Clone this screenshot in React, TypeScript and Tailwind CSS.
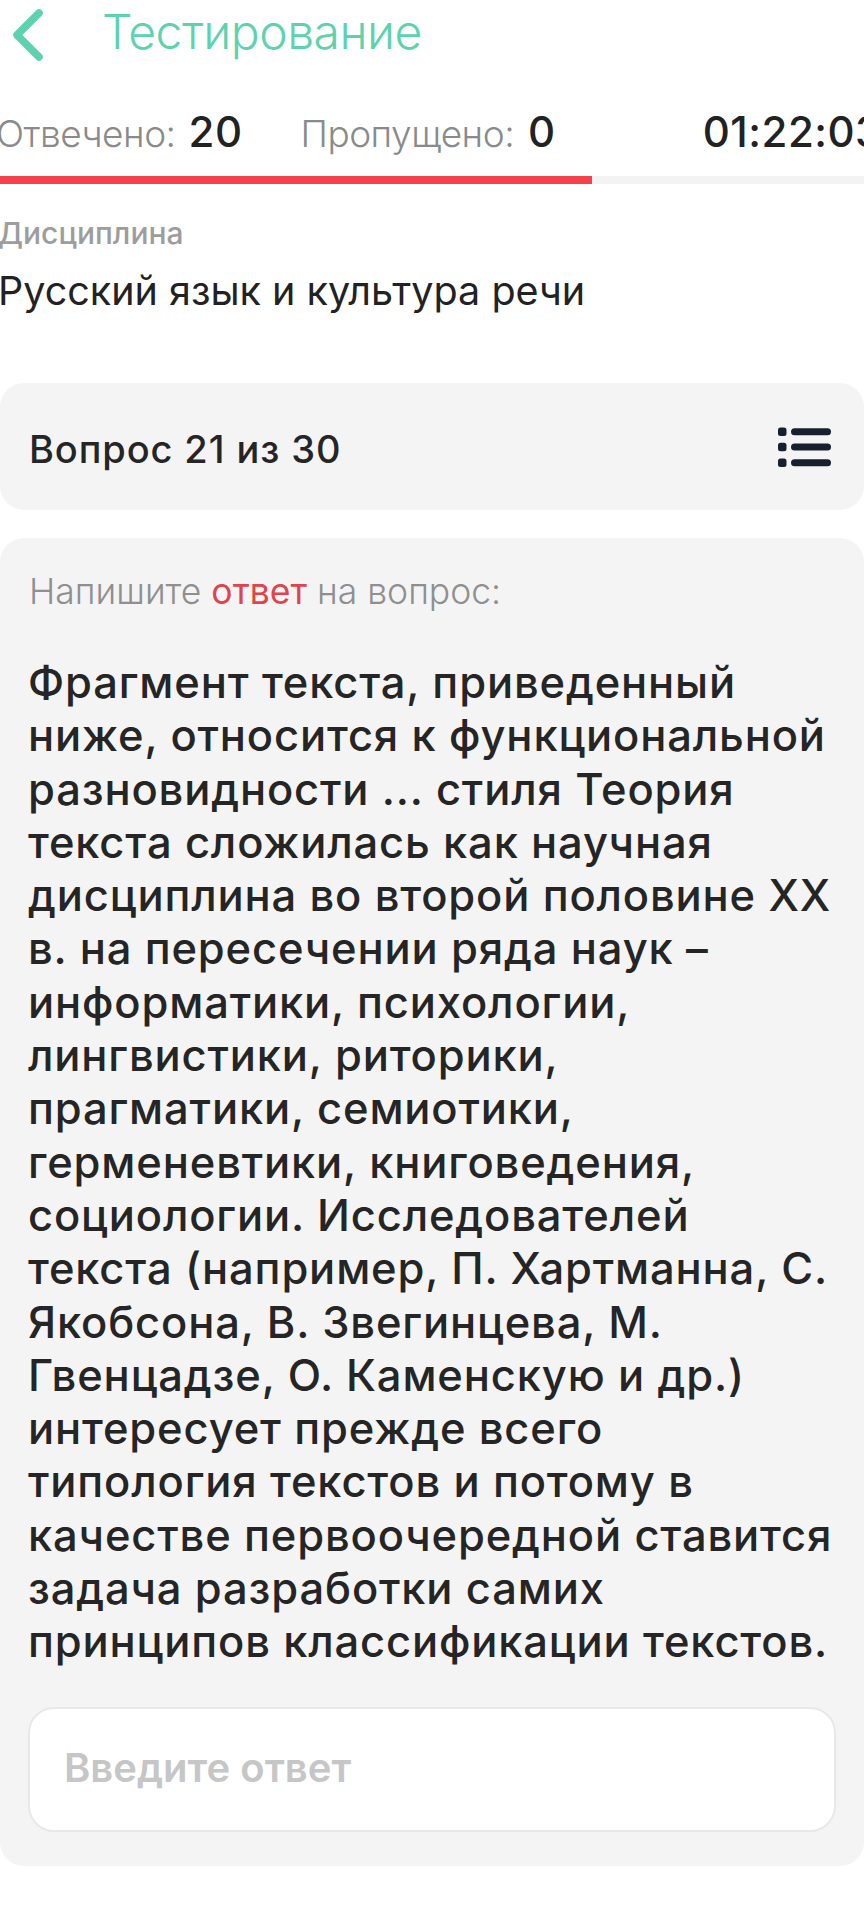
import React from "react";

const lines = [
  "Фрагмент текста, приведенный",
  "ниже, относится к функциональной",
  "разновидности ... стиля Теория",
  "текста сложилась как научная",
  "дисциплина во второй половине XX",
  "в. на пересечении ряда наук –",
  "информатики, психологии,",
  "лингвистики, риторики,",
  "прагматики, семиотики,",
  "герменевтики, книговедения,",
  "социологии. Исследователей",
  "текста (например, П. Хартманна, С.",
  "Якобсона, В. Звегинцева, М.",
  "Гвенцадзе, О. Каменскую и др.)",
  "интересует прежде всего",
  "типология текстов и потому в",
  "качестве первоочередной ставится",
  "задача разработки самих",
  "принципов классификации текстов.",
];

function ListIcon() {
  return (
    <svg width="54" height="40" viewBox="0 0 54 40" fill="#17202e">
      <rect x="0" y="0.5" width="8.5" height="8.5" rx="2.5" />
      <rect x="0" y="15.8" width="8.5" height="8.5" rx="2.5" />
      <rect x="0" y="31.5" width="8.5" height="8.5" rx="2.5" />
      <rect x="13" y="1.3" width="40" height="7" rx="3.5" />
      <rect x="13" y="16.6" width="40" height="7" rx="3.5" />
      <rect x="13" y="32.3" width="40" height="7" rx="3.5" />
    </svg>
  );
}

export default function App() {
  return (
    <div
      className="w-[864px] h-[1920px] overflow-hidden bg-white text-[#252525]"
      style={{ fontFamily: "Inter, 'Noto Sans', sans-serif" }}
    >
      {/* Header */}
      <div className="flex items-center h-[56px] mt-[4px]">
        <svg width="32" height="52" viewBox="0 0 32 52" className="ml-[12px] mt-[6px]">
          <polyline
            points="27,4 5,26 27,48"
            fill="none"
            stroke="#5cd3ae"
            strokeWidth="7.5"
            strokeLinecap="round"
            strokeLinejoin="round"
          />
        </svg>
        <div className="ml-[58px] text-[48px] leading-[56px] font-light text-[#5cd3ae] tracking-[-0.5px]">
          Тестирование
        </div>
      </div>

      {/* Stats */}
      <div className="flex items-baseline mt-[48px] h-[48px] ml-[-4px] whitespace-nowrap leading-[48px]">
        <span className="text-[37px] tracking-[-0.5px] font-light text-[#8a8a8a]">Отвечено:</span>
        <span className="ml-[13px] text-[42px] tracking-[0.5px] font-medium text-[#222]">20</span>
        <span className="ml-[58px] text-[37px] tracking-[-0.5px] font-light text-[#8a8a8a]">Пропущено:</span>
        <span className="ml-[14px] text-[42px] tracking-[0.5px] font-medium text-[#222]">0</span>
        <span className="ml-[147px] text-[42px] tracking-[0.5px] font-medium text-[#222]">01:22:03</span>
      </div>

      {/* Progress */}
      <div className="mt-[20px] h-[8px] flex">
        <div className="w-[592px] h-full bg-[#f6404a]" />
        <div className="flex-1 h-full bg-[#f3f3f3]" />
      </div>

      {/* Discipline */}
      <div className="mt-[31px] text-[30px] leading-[36px] font-medium text-[#9d9d9d] ml-[-2px]">
        Дисциплина
      </div>
      <div className="mt-[16px] text-[39.5px] leading-[48px] font-normal text-[#222] ml-[-2px]">
        Русский язык и культура речи
      </div>

      {/* Question counter card */}
      <div className="mt-[68px] h-[127px] bg-[#f4f4f4] rounded-[24px] flex items-center justify-between pl-[29px] pr-[32px]">
        <div className="text-[38px] tracking-[0.9px] leading-[44px] font-medium text-[#252525] mt-[4px]">
          Вопрос 21 из 30
        </div>
        <ListIcon />
      </div>

      {/* Question card */}
      <div className="mt-[28px] bg-[#f4f4f4] rounded-[24px] px-[28px] pt-[34px] pb-[34px]">
        <div className="text-[35.5px] leading-[40px] font-light text-[#8f8f8f] pl-[1px]">
          Напишите <span className="text-[#e0434b] font-normal">ответ</span> на вопрос:
        </div>
        <div className="mt-[44px] text-[43.5px] tracking-[0.85px] leading-[53.3px] font-medium text-[#252525]">
          {lines.map((l, i) => (
            <div key={i} className="whitespace-nowrap">
              {l}
            </div>
          ))}
        </div>
        <textarea
          className="mt-[38px] block w-[808px] h-[125px] resize-none bg-white border-2 border-[#e8e8e8] rounded-[26px] pl-[34px] pt-[34px] text-[40px] leading-[50px] font-semibold outline-none placeholder:text-[#c6c6c6]"
          placeholder="Введите ответ"
        />
      </div>
    </div>
  );
}
